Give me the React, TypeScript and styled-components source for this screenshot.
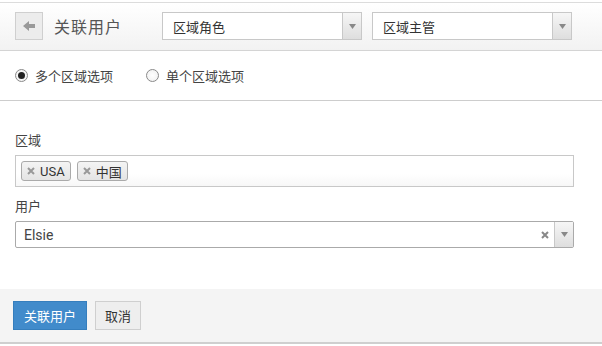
import React from "react";
import styled, { createGlobalStyle } from "styled-components";

const Global = createGlobalStyle`
  html, body { margin: 0; padding: 0; background: #fff; }
  body { font-family: Roboto, "Noto Sans CJK SC", "Liberation Sans", sans-serif; color: #333; }
  * { box-sizing: border-box; }
`;

const Page = styled.div`
  width: 602px;
  height: 346px;
  padding-top: 2px;
  display: flex;
  flex-direction: column;
`;

const Header = styled.div`
  height: 49px;
  border-top: 1px solid #dcdcdc;
  border-bottom: 1px solid #d4d4d4;
  background: linear-gradient(to bottom, #ffffff 0%, #f2f2f2 100%);
  display: flex;
  align-items: center;
  padding-left: 15px;
  padding-bottom: 1px;
`;

const BackButton = styled.div`
  width: 28px;
  height: 28px;
  border: 1px solid #cfcfcf;
  background: #ececec;
  display: flex;
  align-items: center;
  justify-content: center;
`;

const Title = styled.div`
  margin-left: 11px;
  font-size: 16px;
  color: #555;
  letter-spacing: 1px;
  width: 108px;
`;

const Select = styled.div<{ $w: number; $ml?: number }>`
  width: ${(p) => p.$w}px;
  margin-left: ${(p) => p.$ml ?? 0}px;
  height: 28px;
  border: 1px solid #c8c8c8;
  background: #fff;
  display: flex;
  align-items: center;
  font-size: 13px;
  color: #333;
`;

const SelectText = styled.div<{ $pl: number }>`
  flex: 1;
  padding-left: ${(p) => p.$pl}px;
`;

const ArrowBox = styled.div`
  width: 19px;
  align-self: stretch;
  border-left: 1px solid #c8c8c8;
  background: linear-gradient(to bottom, #f6f6f6, #dedede);
  display: flex;
  align-items: center;
  justify-content: center;
`;

const Caret = () => (
  <svg width="7" height="5" viewBox="0 0 7 5">
    <path d="M0 0H7L3.5 5Z" fill="#888" />
  </svg>
);

const RadioRow = styled.div`
  height: 50px;
  border-bottom: 1px solid #cdcdcd;
  display: flex;
  align-items: center;
  padding-left: 15px;
  padding-bottom: 1px;
  font-size: 13px;
  color: #444;
`;

const RadioItem = styled.label<{ $w: number }>`
  display: flex;
  align-items: center;
  width: ${(p) => p.$w}px;
`;

const RadioCircle = styled.span<{ $on?: boolean }>`
  width: 13px;
  height: 13px;
  border-radius: 50%;
  border: 1px solid #8a8a8a;
  background: radial-gradient(circle, #fff 0%, #eee 100%);
  display: flex;
  align-items: center;
  justify-content: center;
  margin-right: 7px;
  &::after {
    content: "";
    width: 7px;
    height: 7px;
    border-radius: 50%;
    background: ${(p) => (p.$on ? "#222" : "transparent")};
  }
`;

const Form = styled.div`
  padding: 29px 28px 0 15px;
  flex: 1;
`;

const Label = styled.div`
  font-size: 13px;
  color: #444;
  height: 19px;
  margin-bottom: 6px;
`;

const MultiBox = styled.div`
  height: 32px;
  border: 1px solid #c8c8c8;
  background: linear-gradient(to bottom, #fff 60%, #f7f7f7 100%);
  display: flex;
  align-items: center;
  padding-left: 5px;
  gap: 6px;
  margin-bottom: 9px;
`;

const Tag = styled.div`
  height: 20px;
  border: 1px solid #aaa;
  border-radius: 3px;
  background: linear-gradient(to bottom, #f4f4f4, #e4e4e4);
  display: flex;
  align-items: center;
  padding: 0 5px 0 5px;
  font-size: 13px;
  color: #333;
  gap: 5px;
`;

const XIcon = ({ c = "#999" }: { c?: string }) => (
  <svg width="8" height="8" viewBox="0 0 8 8">
    <path d="M1 1L7 7M7 1L1 7" stroke={c} strokeWidth="2" />
  </svg>
);

const UserSelect = styled.div`
  height: 27px;
  border: 1px solid #aaa;
  border-radius: 2px;
  background: #fff;
  display: flex;
  align-items: center;
  font-size: 14px;
  color: #444;
`;

const ClearBtn = styled.div`
  width: 18px;
  display: flex;
  align-items: center;
  justify-content: center;
`;

const Footer = styled.div`
  height: 55px;
  background: #f4f4f4;
  border-bottom: 2px solid #cfcfcf;
  display: flex;
  align-items: center;
  padding-left: 13px;
  gap: 8px;
  margin-bottom: 2px;
  padding-bottom: 1px;
`;

const Button = styled.button<{ $primary?: boolean }>`
  height: 29px;
  padding: 0 ${(p) => (p.$primary ? 10 : 9)}px;
  font-family: inherit;
  font-size: 13px;
  border: 1px solid ${(p) => (p.$primary ? "#357ebd" : "#cfcfcf")};
  background: ${(p) => (p.$primary ? "#418bcb" : "#eeeeee")};
  color: ${(p) => (p.$primary ? "#fff" : "#333")};
  border-radius: 0;
`;

export default function App() {
  return (
    <>
      <Global />
      <Page>
        <Header>
          <BackButton>
            <svg width="12" height="10" viewBox="0 0 12 10">
              <path d="M0 5L6 0V3H12V7H6V10Z" fill="#999" />
            </svg>
          </BackButton>
          <Title>关联用户</Title>
          <Select $w={200}>
            <SelectText $pl={10}>区域角色</SelectText>
            <ArrowBox><Caret /></ArrowBox>
          </Select>
          <Select $w={200} $ml={10}>
            <SelectText $pl={10}>区域主管</SelectText>
            <ArrowBox><Caret /></ArrowBox>
          </Select>
        </Header>
        <RadioRow>
          <RadioItem $w={131}>
            <RadioCircle $on />
            多个区域选项
          </RadioItem>
          <RadioItem $w={120}>
            <RadioCircle />
            单个区域选项
          </RadioItem>
        </RadioRow>
        <Form>
          <Label>区域</Label>
          <MultiBox>
            <Tag><XIcon />USA</Tag>
            <Tag><XIcon />中国</Tag>
          </MultiBox>
          <Label>用户</Label>
          <UserSelect>
            <SelectText $pl={8}>Elsie</SelectText>
            <ClearBtn><XIcon c="#888" /></ClearBtn>
            <ArrowBox><Caret /></ArrowBox>
          </UserSelect>
        </Form>
        <Footer>
          <Button $primary>关联用户</Button>
          <Button>取消</Button>
        </Footer>
      </Page>
    </>
  );
}
